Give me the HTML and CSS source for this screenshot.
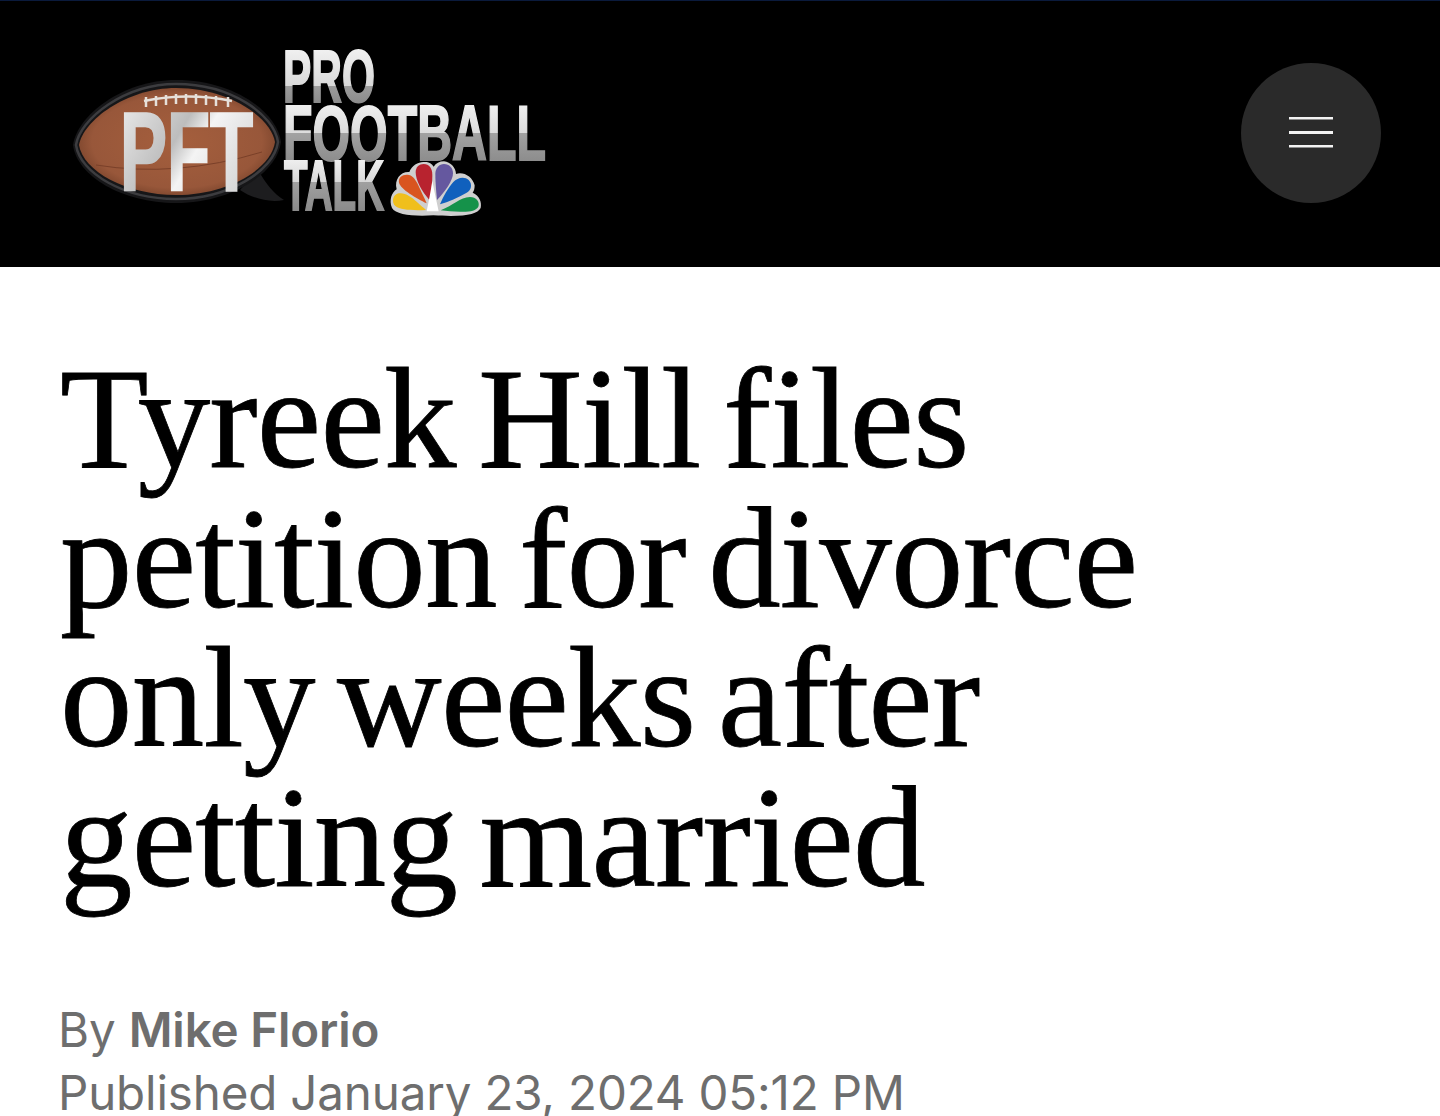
FILE: index.html
```html
<!DOCTYPE html>
<html lang="en">
<head>
<meta charset="utf-8">
<title>Tyreek Hill files petition for divorce only weeks after getting married</title>
<link rel="stylesheet" href="styles.css">
</head>
<body>
<header class="site-header">
  <a class="logo" href="#" aria-label="Pro Football Talk">
    <svg class="logo-svg" viewBox="60 40 500 190" width="500" height="190" xmlns="http://www.w3.org/2000/svg">
      <defs>
        <radialGradient id="leather" cx="0.5" cy="0.5" r="0.62">
          <stop offset="0" stop-color="#a55f3d"/>
          <stop offset="0.7" stop-color="#98573a"/>
          <stop offset="1" stop-color="#60331f"/>
        </radialGradient>
        <linearGradient id="pftFill" gradientUnits="userSpaceOnUse" x1="120" y1="110" x2="255" y2="190">
          <stop offset="0" stop-color="#e8e8e8"/>
          <stop offset="0.4" stop-color="#bdbdbd"/>
          <stop offset="0.55" stop-color="#f4f4f4"/>
          <stop offset="1" stop-color="#cfcfcf"/>
        </linearGradient>
        <linearGradient id="proFill" gradientUnits="userSpaceOnUse" x1="0" y1="48" x2="0" y2="104">
          <stop offset="0" stop-color="#f1f1f1"/>
          <stop offset="0.68" stop-color="#d9d9d9"/>
          <stop offset="0.68" stop-color="#9c9c9c"/>
          <stop offset="1" stop-color="#8a8a8a"/>
        </linearGradient>
        <linearGradient id="footballFill" gradientUnits="userSpaceOnUse" x1="0" y1="102" x2="0" y2="162">
          <stop offset="0" stop-color="#f1f1f1"/>
          <stop offset="0.52" stop-color="#dcdcdc"/>
          <stop offset="0.52" stop-color="#a2a2a2"/>
          <stop offset="1" stop-color="#8c8c8c"/>
        </linearGradient>
        <linearGradient id="talkFill" gradientUnits="userSpaceOnUse" x1="0" y1="160" x2="0" y2="212">
          <stop offset="0" stop-color="#eeeeee"/>
          <stop offset="0.42" stop-color="#d8d8d8"/>
          <stop offset="0.42" stop-color="#a0a0a0"/>
          <stop offset="1" stop-color="#8a8a8a"/>
        </linearGradient>
      </defs>

      <path d="M284 200C268 203 252 198 240 190L258 170C266 184 274 194 284 200Z" fill="#1d1d1f"/>
      <path d="M73 145C77 116 122 80 176 80C234 80 277 112 281 142C277 174 230 203 176 203C122 203 77 176 73 145Z" fill="#161618"/>
      <path d="M76 145C80 119 124 84 176 84C232 84 274 115 278 142C274 171 228 199 176 199C124 199 80 173 76 145Z" fill="none" stroke="#3c3c3f" stroke-width="2.5"/>
      <path d="M79 145C83 121 126 88 176 88C230 88 271 118 275 142C271 170 226 195 176 195C126 195 83 171 79 145Z" fill="url(#leather)"/>
      <path d="M144 101Q188 92 232 101" fill="none" stroke="#e6e0da" stroke-width="2.5"/>
      <path d="M146 97v10M156 96v10M166 95v10M176 94v10M186 94v10M196 94v10M206 95v10M216 96v10M228 97v10" stroke="#e6e0da" stroke-width="2.5"/>
      <path d="M96 165Q176 178 262 152" fill="none" stroke="#7a4029" stroke-width="1"/>

      <text class="logo-pft" x="120" y="190" textLength="133" lengthAdjust="spacingAndGlyphs" fill="url(#pftFill)" stroke="url(#pftFill)">PFT</text>
      <text class="logo-word logo-pro" x="283" y="102" textLength="92" lengthAdjust="spacingAndGlyphs" fill="url(#proFill)" stroke="url(#proFill)">PRO</text>
      <text class="logo-word logo-football" x="283" y="160" textLength="263" lengthAdjust="spacingAndGlyphs" fill="url(#footballFill)" stroke="url(#footballFill)">FOOTBALL</text>
      <text class="logo-word logo-talk" x="284" y="210" textLength="100" lengthAdjust="spacingAndGlyphs" fill="url(#talkFill)" stroke="url(#talkFill)">TALK</text>

      <g transform="translate(380 150) scale(.3333)">
        <path d="M160 196C100 200 48 194 36 174C26 150 36 126 50 118C42 88 62 64 88 66C96 44 118 34 134 36C148 36 156 42 161 50C168 40 178 34 192 34C212 36 228 54 228 72C250 64 278 80 284 106C284 116 282 124 278 128C298 136 306 156 302 174C292 194 250 202 160 196Z" fill="#cfcfcf"/>
        <path d="M150 152C125 125 107 90 107 67C107 50 118 42 131 42C148 42 157 56 157 74C157 98 154 130 150 152Z" fill="#b8232f"/>
        <path d="M171 150C168 120 166 92 166 72C166 54 178 42 192 42C208 42 219 54 219 70C219 92 195 125 171 150Z" fill="#65589f"/>
        <path d="M140 160C110 145 62 118 57 98C54 82 68 73 82 74C97 75 105 86 112 100C122 122 132 142 140 160Z" fill="#d9541f"/>
        <path d="M180 163C190 140 205 112 220 96C232 82 254 78 266 90C279 103 273 122 260 128C235 143 205 155 180 163Z" fill="#1060bd"/>
        <path d="M138 180C100 182 60 180 47 169C33 158 38 133 56 130C75 127 95 141 110 155C120 165 130 172 138 180Z" fill="#f0bf1c"/>
        <path d="M182 181C220 166 240 142 270 141C288 141 301 156 295 170C288 182 270 186 240 185C220 185 200 183 182 181Z" fill="#15924a"/>
        <path d="M157 92C152 125 146 155 140 184H176C170 155 163 125 157 92Z" fill="#fff"/>
      </g>
    </svg>
  </a>
  <button class="menu-button" type="button" aria-label="Menu">
    <span class="menu-bar"></span>
    <span class="menu-bar menu-bar-mid"></span>
    <span class="menu-bar"></span>
  </button>
</header>
<main class="article">
  <h1 class="headline">Tyreek Hill files petition for divorce only weeks after getting married</h1>
  <div class="meta">
    <p class="byline">By <strong class="author">Mike Florio</strong></p>
    <p class="published">Published January 23, 2024 05:12 PM</p>
  </div>
</main>
</body>
</html>
```
FILE: styles.css
```css
html, body {
  margin: 0;
  padding: 0;
  height: 1116px;
  overflow: hidden;
  background: #fff;
}

.site-header {
  box-sizing: border-box;
  height: 267px;
  background: #000;
  border-top: 1px solid #0a1a3c;
  display: flex;
  align-items: center;
  justify-content: space-between;
  padding: 0 59px 0 60px;
}

.logo {
  display: block;
  line-height: 0;
  margin-top: 2px;
}

.logo-svg {
  display: block;
}

.logo-pft {
  font-family: "Liberation Sans Narrow", "Liberation Sans", sans-serif;
  font-weight: 700;
  font-size: 112px;
  stroke-width: 2.5px;
}

.logo-word {
  font-family: "Liberation Sans Narrow", "Liberation Sans", sans-serif;
  font-weight: 700;
  stroke-width: 2px;
}

.logo-pro {
  font-size: 74px;
}

.logo-talk {
  font-size: 70px;
}

.logo-football {
  font-size: 78px;
}

.menu-button {
  width: 140px;
  height: 140px;
  margin-bottom: 3px;
  border: 0;
  border-radius: 50%;
  background: #2a2a2a;
  padding: 0;
  display: flex;
  flex-direction: column;
  align-items: center;
  justify-content: center;
  gap: 11px;
}

.menu-bar {
  display: block;
  width: 44px;
  height: 2px;
  background: #f2f2f2;
  border-bottom: 1px solid #8c8c8c;
}

.menu-bar-mid {
  height: 3px;
  border-bottom: 0;
}

.article {
  padding: 0 60px;
}

.headline {
  margin: 82px 0 0;
  max-width: 1200px;
  font-family: "Liberation Serif", serif;
  font-weight: 400;
  font-size: 145px;
  line-height: 139.7px;
  letter-spacing: -0.8px;
  word-spacing: -13px;
  -webkit-text-stroke: 0.8px #000;
  color: #000;
}

.meta {
  margin-top: 90px;
  margin-left: -2px;
  font-family: Inter, "Liberation Sans", sans-serif;
  font-size: 47.5px;
  line-height: 63px;
  letter-spacing: -0.15px;
  color: #6e6e6e;
}

.byline,
.published {
  margin: 0;
}

.author {
  font-weight: 600;
}
```
